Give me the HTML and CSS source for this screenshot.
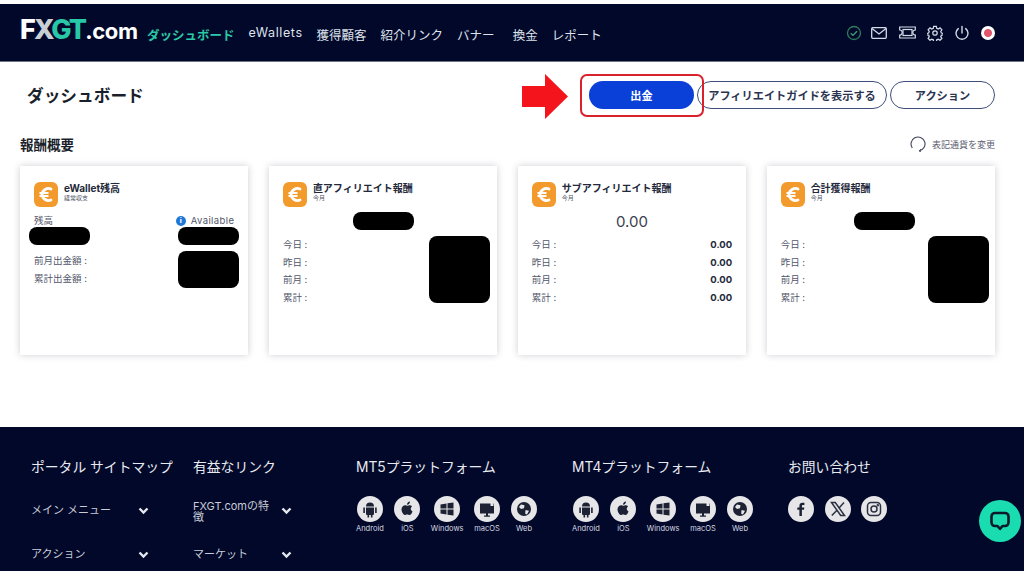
FILE: index.html
```html
<!DOCTYPE html>
<html>
  <head>
    <meta charset="utf-8">
    <title>ダッシュボード</title>
    <link rel="stylesheet" href="styles.css">
  </head>
  <body>
    <svg class="defs" width="0" height="0">
      <symbol id="i-euro" viewBox="0 0 24 24">
        <path d="M17 6.500A6.500 6.500 0 0 0 8 12a6.500 6.500 0 0 0 9 5.500" fill="none" stroke="#fff" stroke-width="2.800" stroke-linecap="round"/>
        <path d="M5.500 10.500h9M5.500 13.500h9" stroke="#fff" stroke-width="1.800"/>
      </symbol>
      <symbol id="i-android" viewBox="0 0 26 26">
        <path d="M9 10.500a4 4 0 0 1 8 0zM9 11.500h8v6.500a1 1 0 0 1-1 1h-6a1 1 0 0 1-1-1zM6.300 11.500h1.600v5.500H6.300zM18.100 11.500h1.600v5.500h-1.600zM10.500 19h1.600v2.500h-1.600zM13.900 19h1.600v2.500h-1.600z" fill="#1c2233"/>
      </symbol>
      <symbol id="i-apple" viewBox="0 0 26 26">
        <path d="M14.500 9.500c1.200-.5 2.600-.4 3.600.9-2 1.400-1.700 4 .4 5-.6 1.600-1.700 3.600-3 3.600-.9 0-1.200-.6-2.300-.6s-1.500.6-2.300.6C9.300 19 7.500 15.800 7.500 13.300c0-2.800 2.600-4.800 5-3.800.8.300 1.300.3 2 0zM13 8.800c0-1.800 1.200-3.200 2.900-3.300.1 1.800-1.200 3.300-2.900 3.300z" fill="#1c2233"/>
      </symbol>
      <symbol id="i-windows" viewBox="0 0 26 26">
        <path d="M6.500 8.500l6-1v5h-6zM13.500 7.300l6-.8v6h-6zM6.500 13.500h6v5l-6-1zM13.500 13.500h6v6l-6-.8z" fill="#1c2233"/>
      </symbol>
      <symbol id="i-mac" viewBox="0 0 26 26">
        <path d="M6 7.500h14v10H6zM10 19.500h6v1.300h-6zM12 17.500h2v2h-2z" fill="#1c2233"/>
        <path d="M16.500 7h3v3h-3z" fill="#e6e6e8"/>
      </symbol>
      <symbol id="i-web" viewBox="0 0 26 26">
        <circle cx="13" cy="13" r="7" fill="#1c2233"/>
        <path d="M10 8.500l3.500.8-.5 3-3 .7-2-2zM14.500 14l3.500.7-2 3.800-1.800-.8z" fill="#e6e6e8"/>
      </symbol>
    </svg>

    <header class="topbar">
      <div class="logo"><span class="logo-fx">F<span class="logo-x">X</span></span><span class="logo-gt">GT</span><span class="logo-com">.com</span></div>
      <nav class="nav">
        <a class="nav-link active">ダッシュボード</a>
        <a class="nav-link latin">eWallets</a>
        <a class="nav-link">獲得顧客</a>
        <a class="nav-link">紹介リンク</a>
        <a class="nav-link">バナー</a>
        <a class="nav-link exchange">換金</a>
        <a class="nav-link">レポート</a>
      </nav>
      <div class="top-icons">
        <svg class="icon-check" width="16" height="16" viewBox="0 0 16 16" fill="none"><circle cx="8" cy="8" r="6.500" stroke="#2f7a5c" stroke-width="1.300"/><path d="M4.800 8.200l2.200 2.200 4-4.200" stroke="#3fa47c" stroke-width="1.300"/></svg>
        <svg class="icon-mail" width="16" height="12" viewBox="0 0 16 12" fill="none" stroke="#d5dae6" stroke-width="1.300"><rect x=".7" y=".7" width="14.600" height="10.600" rx="1"/><path d="M1 1.500l7 5.500 7-5.500"/></svg>
        <svg width="17" height="13" viewBox="0 0 17 13" fill="none" stroke="#d5dae6" stroke-width="1.200"><path d="M.7 1h15.600v3a2.500 2.500 0 0 0 0 5v3H.7V9a2.500 2.500 0 0 0 0-5z"/><rect x="4" y="3.500" width="9" height="6"/></svg>
        <svg width="16" height="16" viewBox="0 0 24 24" fill="none" stroke="#d5dae6" stroke-width="1.900"><circle cx="12" cy="12" r="3.300"/><path d="M10 2h4l.6 3 2.300 1 2.600-1.700 2.800 2.800-1.700 2.600 1 2.300 3 .6v2l-3 .6-1 2.300 1.700 2.600-2.800 2.800-2.600-1.700-2.300 1-.6 3h-4l-.6-3-2.300-1-2.600 1.700-2.800-2.800 1.700-2.600-1-2.300-3-.6v-2l3-.6 1-2.300-1.700-2.600 2.800-2.800 2.600 1.700 2.300-1z"/></svg>
        <svg width="16" height="16" viewBox="0 0 16 16" fill="none" stroke="#d5dae6" stroke-width="1.400" stroke-linecap="round"><path d="M8 1.500v6.500"/><path d="M4.300 3.600a6 6 0 1 0 7.400 0"/></svg>
        <span class="flag"></span>
      </div>
    </header>

    <main class="content">
      <div class="title-row">
        <h1 class="page-title">ダッシュボード</h1>
        <div class="actions">
          <a class="btn btn-primary">出金</a>
          <a class="btn btn-outline guide">アフィリエイトガイドを表示する</a>
          <a class="btn btn-outline action">アクション</a>
        </div>
      </div>

      <div class="section-head">
        <h2 class="section-title">報酬概要</h2>
        <div class="currency">
          <svg width="16" height="16" viewBox="0 0 16 16" fill="none" stroke="#3d4356" stroke-width="1.100"><path d="M2.300 12A7 7 0 1 1 9.500 14.800"/><path d="M11 13.200l-2 1.700 2 1" stroke-width=".9"/></svg>
          <span>表記通貨を変更</span>
        </div>
      </div>

      <div class="cards">
        <section class="card">
          <div class="card-head">
            <svg class="euro" width="24" height="25"><use href="#i-euro"/></svg>
            <div>
              <div class="card-title">eWallet残高</div>
              <div class="card-sub">経常収支</div>
            </div>
          </div>
          <div class="balance-labels">
            <span>残高</span>
            <span class="available"><i class="info">i</i><span class="available-text">Available</span></span>
          </div>
          <div class="balance-values">
            <span class="mask pill"></span>
            <span class="mask pill"></span>
          </div>
          <div class="rows rows-wallet">
            <div class="row-labels">
              <div>前月出金額 :</div>
              <div>累計出金額 :</div>
            </div>
            <span class="mask block-small"></span>
          </div>
        </section>

        <section class="card">
          <div class="card-head">
            <svg class="euro" width="24" height="25"><use href="#i-euro"/></svg>
            <div>
              <div class="card-title">直アフィリエイト報酬</div>
              <div class="card-sub">今月</div>
            </div>
          </div>
          <div class="amount"><span class="mask pill"></span></div>
          <div class="rows">
            <div class="row-labels">
              <div>今日 :</div>
              <div>昨日 :</div>
              <div>前月 :</div>
              <div>累計 :</div>
            </div>
            <span class="mask block-large"></span>
          </div>
        </section>

        <section class="card">
          <div class="card-head">
            <svg class="euro" width="24" height="25"><use href="#i-euro"/></svg>
            <div>
              <div class="card-title">サブアフィリエイト報酬</div>
              <div class="card-sub">今月</div>
            </div>
          </div>
          <div class="amount">0.00</div>
          <div class="rows rows-plain">
            <div class="row-labels">
              <div>今日 :</div>
              <div>昨日 :</div>
              <div>前月 :</div>
              <div>累計 :</div>
            </div>
            <div class="row-values">
              <div>0.00</div>
              <div>0.00</div>
              <div>0.00</div>
              <div>0.00</div>
            </div>
          </div>
        </section>

        <section class="card card-total">
          <div class="card-head">
            <svg class="euro" width="24" height="25"><use href="#i-euro"/></svg>
            <div>
              <div class="card-title">合計獲得報酬</div>
              <div class="card-sub">今月</div>
            </div>
          </div>
          <div class="amount"><span class="mask pill"></span></div>
          <div class="rows">
            <div class="row-labels">
              <div>今日 :</div>
              <div>昨日 :</div>
              <div>前月 :</div>
              <div>累計 :</div>
            </div>
            <span class="mask block-large"></span>
          </div>
        </section>
      </div>
    </main>

    <footer class="footer">
      <div class="foot-col col-portal">
        <h3>ポータル サイトマップ</h3>
        <div class="acc"><span>メイン メニュー</span><svg class="chev" width="11" height="8" viewBox="0 0 11 8"><path d="M1.500 1.500l4 4 4-4" fill="none" stroke="#e6e8ee" stroke-width="2.400"/></svg></div>
        <div class="acc"><span>アクション</span><svg class="chev" width="11" height="8" viewBox="0 0 11 8"><path d="M1.500 1.500l4 4 4-4" fill="none" stroke="#e6e8ee" stroke-width="2.400"/></svg></div>
      </div>
      <div class="foot-col col-links">
        <h3>有益なリンク</h3>
        <div class="acc"><span class="wrap">FXGT.comの特徴</span><svg class="chev" width="11" height="8" viewBox="0 0 11 8"><path d="M1.500 1.500l4 4 4-4" fill="none" stroke="#e6e8ee" stroke-width="2.400"/></svg></div>
        <div class="acc"><span>マーケット</span><svg class="chev" width="11" height="8" viewBox="0 0 11 8"><path d="M1.500 1.500l4 4 4-4" fill="none" stroke="#e6e8ee" stroke-width="2.400"/></svg></div>
      </div>
      <div class="foot-col col-platform">
        <h3>MT5プラットフォーム</h3>
        <div class="platforms">
          <div class="platform"><span class="round"><svg width="26" height="26"><use href="#i-android"/></svg></span>Android</div>
          <div class="platform"><span class="round"><svg width="26" height="26"><use href="#i-apple"/></svg></span>iOS</div>
          <div class="platform"><span class="round"><svg width="26" height="26"><use href="#i-windows"/></svg></span>Windows</div>
          <div class="platform"><span class="round"><svg width="26" height="26"><use href="#i-mac"/></svg></span>macOS</div>
          <div class="platform"><span class="round"><svg width="26" height="26"><use href="#i-web"/></svg></span>Web</div>
        </div>
      </div>
      <div class="foot-col col-platform">
        <h3>MT4プラットフォーム</h3>
        <div class="platforms">
          <div class="platform"><span class="round"><svg width="26" height="26"><use href="#i-android"/></svg></span>Android</div>
          <div class="platform"><span class="round"><svg width="26" height="26"><use href="#i-apple"/></svg></span>iOS</div>
          <div class="platform"><span class="round"><svg width="26" height="26"><use href="#i-windows"/></svg></span>Windows</div>
          <div class="platform"><span class="round"><svg width="26" height="26"><use href="#i-mac"/></svg></span>macOS</div>
          <div class="platform"><span class="round"><svg width="26" height="26"><use href="#i-web"/></svg></span>Web</div>
        </div>
      </div>
      <div class="foot-col col-contact">
        <h3>お問い合わせ</h3>
        <div class="socials">
          <span class="round"><svg width="26" height="26" viewBox="0 0 26 26"><path d="M13.900 20v-6.200h2.100l.3-2.400h-2.400V10c0-.7.2-1.100 1.200-1.100h1.300V6.800c-.3 0-1-.1-1.900-.1-1.900 0-3.100 1.100-3.100 3.100v1.600H9.300v2.400h2.100V20z" fill="#1c2233"/></svg></span>
          <span class="round"><svg width="26" height="26" viewBox="0 0 26 26"><path d="M6.500 6.500h3.800l9.200 13h-3.800z" fill="none" stroke="#2b3142" stroke-width="1.500"/><path d="M19 6.500l-5.200 5.800M12 14.200l-5.200 5.300" stroke="#2b3142" stroke-width="1.500"/></svg></span>
          <span class="round"><svg width="26" height="26" viewBox="0 0 26 26" fill="none" stroke="#2b3142" stroke-width="1.500"><rect x="6.500" y="6.500" width="13" height="13" rx="3.500"/><circle cx="13" cy="13" r="3"/><circle cx="16.800" cy="9.200" r=".5"/></svg></span>
        </div>
      </div>
    </footer>

    <!-- annotation drawn on top of the screenshot -->
    <div class="highlight"></div>
    <svg class="arrow" width="46" height="45" viewBox="0 0 46 45"><path d="M0 12h23V0l23 22.500L23 45V33H0z" fill="#f4141c"/></svg>

    <a class="chat">
      <svg width="22" height="22" viewBox="0 0 22 22" fill="none"><path d="M6 3h10a3.500 3.500 0 0 1 3.500 3.500v6A3.500 3.500 0 0 1 16 16h-2.500L11 18.800 8.500 16H6a3.500 3.500 0 0 1-3.500-3.500v-6A3.500 3.500 0 0 1 6 3z" stroke="#0c1a2a" stroke-width="2.600" stroke-linejoin="round"/></svg>
    </a>
  </body>
</html>
```

FILE: styles.css
```css
* {
  box-sizing: border-box;
}
html, body {
  margin: 0;
  height: 576px;
  overflow: hidden;
}
body {
  position: relative;
  padding-top: 4px;
  background: #fff;
  color: #1d2233;
  font-family: Inter, "Noto Sans CJK JP", sans-serif;
}
h1, h2, h3 {
  margin: 0;
}
.defs {
  position: absolute;
}

/* top bar */
.topbar {
  display: flex;
  align-items: center;
  height: 58px;
  padding-left: 20px;
  background: #01082a;
  border-bottom: 1px solid #6d7386;
}
.logo {
  width: 127px;
  color: #fff;
  font-weight: 800;
  font-size: 27px;
  line-height: 1;
  letter-spacing: -1.800px;
  white-space: nowrap;
  margin-top: -6px;
}
.logo-x {
  color: #c8d0d6;
}
.logo-gt {
  color: #27c7a8;
}
.logo-com {
  font-size: 22px;
  font-weight: 700;
  letter-spacing: -.4px;
}
.nav {
  display: flex;
  gap: 14px;
  padding-top: 4px;
}
.nav-link {
  color: #dfe3ea;
  font-size: 12.500px;
  font-weight: 400;
  white-space: nowrap;
}
.nav-link.active {
  color: #2cc9a6;
  font-weight: 700;
}
.nav-link.latin {
  letter-spacing: .6px;
}
.nav-link.exchange {
  margin-left: 4px;
}
.top-icons {
  display: flex;
  align-items: center;
  gap: 11px;
  margin-left: auto;
  margin-right: 29px;
}
.icon-check {
  margin-right: -2px;
}
.icon-mail {
  margin-right: 1px;
}
.flag {
  width: 14px;
  height: 14px;
  border-radius: 50%;
  background: radial-gradient(circle, #e0566a 0 3.500px, #fff 4.500px);
}

/* main area */
.content {
  height: 365px;
  padding: 0 29px 0 20px;
}
.title-row {
  display: flex;
  justify-content: space-between;
  align-items: center;
  padding: 19px 0 0 7px;
}
.page-title {
  font-size: 16.700px;
  font-weight: 700;
  color: #1b1f2c;
}
.actions {
  display: flex;
  gap: 3px;
}
.btn {
  display: flex;
  align-items: center;
  justify-content: center;
  height: 28px;
  padding-bottom: 1px;
  border-radius: 14px;
  font-size: 11.200px;
  font-weight: 700;
  white-space: nowrap;
}
.btn-primary {
  width: 105px;
  background: #0a3fd8;
  color: #fff;
}
.btn-outline {
  border: 1.500px solid #3d4f78;
  color: #2a3350;
}
.guide {
  width: 190px;
}
.action {
  width: 105px;
}
.section-head {
  display: flex;
  justify-content: space-between;
  align-items: center;
  padding-top: 25px;
}
.section-title {
  font-size: 13.500px;
  font-weight: 700;
  color: #1b1f2c;
}
.currency {
  display: flex;
  align-items: center;
  gap: 6px;
  color: #5b6070;
  font-size: 9px;
}
.cards {
  display: grid;
  grid-template-columns: repeat(4, 1fr);
  gap: 20.500px;
  margin-top: 12px;
}
.card {
  height: 189px;
  padding: 16px 14px 0;
  background: #fff;
  box-shadow: 0 0 7px rgba(30, 35, 60, .22);
}
.card-head {
  display: flex;
  gap: 6px;
}
.euro {
  flex: none;
  background: #f39a2d;
  border-radius: 6px;
}
.card-title {
  font-size: 10px;
  font-weight: 700;
  line-height: 12px;
  color: #23283a;
  white-space: nowrap;
}
.card-sub {
  font-size: 6px;
  line-height: 8px;
  color: #4d5263;
}
.balance-labels {
  display: flex;
  justify-content: space-between;
  margin-top: 7px;
  font-size: 9.500px;
  line-height: 13px;
  color: #51566a;
}
.available {
  display: flex;
  align-items: center;
  gap: 5px;
}
.available-text {
  letter-spacing: .4px;
}
.info {
  display: block;
  width: 10px;
  height: 10px;
  border-radius: 50%;
  background: #1f77d8;
  color: #fff;
  font-size: 7px;
  font-style: normal;
  font-weight: 800;
  line-height: 10px;
  text-align: center;
}
.balance-values {
  display: flex;
  justify-content: space-between;
  margin: 0 -5px;
}
.mask {
  display: block;
  background: #000;
  border-radius: 8px;
}
.pill {
  width: 61px;
  height: 18px;
}
.block-small {
  width: 61px;
  height: 37px;
  margin-right: -5px;
}
.block-large {
  width: 61px;
  height: 67px;
  margin: 6px -7px 0 0;
}
.card-total .pill {
  margin-left: 8px;
}
.card-total .block-large {
  margin-right: -8px;
}
.amount {
  display: flex;
  justify-content: center;
  align-items: center;
  height: 18px;
  margin-top: 5px;
  font-size: 15px;
  color: #3a3f50;
}
.rows {
  display: flex;
  justify-content: space-between;
  align-items: flex-start;
  font-size: 9.500px;
  color: #51566a;
}
.rows-wallet {
  margin-top: 6px;
}
.rows-wallet .row-labels {
  padding-top: 1px;
}
.row-labels div,
.row-values div {
  line-height: 17.500px;
}
.rows:not(.rows-wallet) .row-labels {
  padding-top: 6px;
}
.row-values {
  padding-top: 6px;
  font-size: 9.500px;
  font-weight: 700;
  color: #23283a;
  text-align: right;
}

/* footer */
.footer {
  display: flex;
  height: 144px;
  padding: 31px 0 0 31px;
  background: #01082a;
  color: #e8eaf0;
}
.foot-col h3 {
  font-size: 13.800px;
  font-weight: 400;
  line-height: 18px;
  white-space: nowrap;
}
.col-portal {
  width: 162px;
}
.col-links {
  width: 163px;
}
.col-platform {
  width: 216px;
}
.acc {
  display: flex;
  justify-content: space-between;
  align-items: center;
  height: 26px;
  padding-top: 2px;
  font-size: 11px;
  line-height: 11px;
  color: #c9ccd6;
}
.acc:nth-of-type(1) {
  margin-top: 20px;
}
.acc:nth-of-type(2) {
  margin-top: 18px;
}
.chev {
  margin-top: 2px;
}
.col-portal .acc {
  width: 118px;
}
.col-links .acc {
  width: 99px;
}
.wrap {
  width: 80px;
  margin-top: 4px;
}
.platforms {
  display: flex;
  gap: 10px;
  margin-top: 20px;
}
.platform {
  display: flex;
  flex-direction: column;
  align-items: center;
  gap: 2px;
  min-width: 27px;
  font-size: 7.500px;
  line-height: 10px;
  color: #d5d8e0;
}
.round {
  display: block;
  width: 26px;
  height: 26px;
  border-radius: 50%;
  background: #e6e6e8;
}
.round svg {
  display: block;
}
.socials {
  display: flex;
  gap: 10.500px;
  margin-top: 20px;
}

/* things that sit over the page */
.highlight {
  position: absolute;
  left: 580px;
  top: 74px;
  width: 124px;
  height: 43px;
  border: 2px solid #d9212c;
  border-radius: 7px;
}
.arrow {
  position: absolute;
  left: 522px;
  top: 74px;
}
.chat {
  position: absolute;
  left: 979px;
  top: 500px;
  display: flex;
  align-items: center;
  justify-content: center;
  width: 42px;
  height: 42px;
  border-radius: 50%;
  background: #19dcb0;
}
```
